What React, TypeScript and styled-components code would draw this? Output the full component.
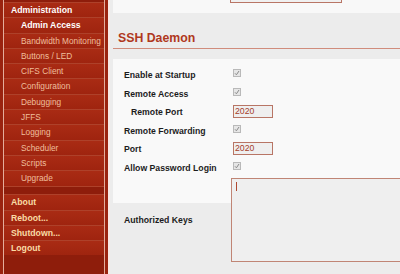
import { Fragment } from "react"
import styled, { createGlobalStyle } from "styled-components"

const Global = createGlobalStyle`
  html, body {
    margin: 0;
    padding: 0;
    background: #eeeeee;
  }
  * {
    box-sizing: border-box;
  }
`

const Page = styled.div`
  display: flex;
  width: 400px;
  height: 274px;
  overflow: hidden;
  font-family: "Liberation Sans", Arial, sans-serif;
`

const Sidebar = styled.nav`
  width: 108px;
  flex: none;
  display: flex;
  background: #9a230f;
  padding: 0 3px 0 3px;
`

const NavLayout = styled.div`
  flex: 1;
  display: flex;
  flex-direction: column;
  padding-top: 2px;
  border-left: 1px solid #e4ad9c;
  border-right: 1px solid #e4ad9c;
  background: #8e1d0b;
`

const NavItem = styled.div<{ $level: "head" | "current" | "sub" | "main" }>`
  height: 15.3px;
  line-height: 15px;
  border-top: 1px solid #ae412a;
  background: linear-gradient(#a92b14, #9f240f);
  white-space: nowrap;
  font-size: ${(p) => (p.$level === "sub" ? "8.3px" : "8.7px")};
  font-weight: ${(p) => (p.$level === "sub" ? "normal" : "bold")};
  padding-left: ${(p) =>
    p.$level === "head" || p.$level === "main" ? "7px" : "17px"};
  color: ${(p) =>
    p.$level === "sub"
      ? "#efbf9d"
      : p.$level === "main"
        ? "#f9dca6"
        : "#ffffff"};
`

const NavGap = styled.div`
  height: 8.7px;
  border-top: 1px solid #ae412a;
  background: #8e1d0b;
`

const Main = styled.main`
  flex: 1;
  display: flex;
  flex-direction: column;
  border-left: 2px solid #f7e9e5;
  background: #ececec;
  padding-left: 3px;
`

const TopPanel = styled.div`
  height: 13px;
  background: #f8f8f8;
`

const TopField = styled.div`
  margin-left: 117px;
  width: 112px;
  height: 3px;
  border: 1px solid #b87565;
  border-top: none;
  background: #f0f0f0;
`

const Heading = styled.h2`
  margin: 17.7px 0 10px;
  padding: 0 0 3px 5px;
  font-size: 12.3px;
  line-height: 14px;
  font-weight: bold;
  color: #b03820;
  border-bottom: 1px solid #d08c7c;
`

const Panel = styled.section`
  background: #f9f9f9;
  padding: 7.75px 0 7px 11px;
  display: grid;
  grid-template-columns: 108px 1fr;
  grid-auto-rows: 18.5px;
`

const Label = styled.label<{ $indent?: boolean }>`
  font-size: 8.7px;
  font-weight: bold;
  color: #1c1c1c;
  line-height: 18.5px;
  padding-left: ${(p) => (p.$indent ? "7px" : "0")};
  align-self: center;
  white-space: nowrap;
`

const Value = styled.div`
  display: flex;
  align-items: center;
  padding-bottom: 3px;
`

const Check = styled.span`
  display: flex;
  align-items: center;
  justify-content: center;
  width: 8px;
  height: 8px;
  margin-left: 1px;
  margin-bottom: 2px;
  border: 1px solid #b9b9b9;
  background: #e6e6e6;
`

const Field = styled.div`
  width: 40px;
  height: 13.5px;
  margin-left: 1px;
  margin-top: 1px;
  border: 1px solid #b87565;
  background: #efefef;
  color: #a5402a;
  font-size: 8.7px;
  line-height: 11.5px;
  padding-left: 1px;
`

const KeysRow = styled.div`
  grid-column: 1 / -1;
  display: grid;
  grid-template-columns: 108px 1fr;
  align-items: center;
  margin-top: 1px;
  height: 84px;
`

const KeysBox = styled.div`
  height: 84px;
  margin-left: -1px;
  margin-right: -20px;
  border: 1px solid #c08575;
  background: #efefef;
  padding: 3px 4px;
`

const Caret = styled.span`
  display: block;
  width: 1px;
  height: 9px;
  background: #b04830;
`

const Tick = () => (
  <svg width="6" height="6" viewBox="0 0 6 6">
    <path d="M1 3.3 L2.4 4.8 L5 1" fill="none" stroke="#8a8a8a" strokeWidth="1" />
  </svg>
)

const tools = [
  "Bandwidth Monitoring",
  "Buttons / LED",
  "CIFS Client",
  "Configuration",
  "Debugging",
  "JFFS",
  "Logging",
  "Scheduler",
  "Scripts",
  "Upgrade",
]

const actions = ["About", "Reboot...", "Shutdown...", "Logout"]

type Row =
  | { label: string; kind: "check"; indent?: boolean }
  | { label: string; kind: "field"; value: string; indent?: boolean }

const rows: Row[] = [
  { label: "Enable at Startup", kind: "check" },
  { label: "Remote Access", kind: "check" },
  { label: "Remote Port", kind: "field", value: "2020", indent: true },
  { label: "Remote Forwarding", kind: "check" },
  { label: "Port", kind: "field", value: "2020" },
  { label: "Allow Password Login", kind: "check" },
]

const App = () => (
  <Page>
    <Global />
    <Sidebar>
      <NavLayout>
        <NavItem $level="head">Administration</NavItem>
        <NavItem $level="current">Admin Access</NavItem>
        {tools.map((t) => (
          <NavItem key={t} $level="sub">
            {t}
          </NavItem>
        ))}
        <NavGap />
        {actions.map((a) => (
          <NavItem key={a} $level="main">
            {a}
          </NavItem>
        ))}
      </NavLayout>
    </Sidebar>
    <Main>
      <TopPanel>
        <TopField />
      </TopPanel>
      <Heading>SSH Daemon</Heading>
      <Panel>
        {rows.map((r) => (
          <Fragment key={r.label}>
            <Label $indent={r.indent}>{r.label}</Label>
            <Value>
              {r.kind === "check" ? (
                <Check>
                  <Tick />
                </Check>
              ) : (
                <Field>{r.value}</Field>
              )}
            </Value>
          </Fragment>
        ))}
        <KeysRow>
          <Label>Authorized Keys</Label>
          <KeysBox>
            <Caret />
          </KeysBox>
        </KeysRow>
      </Panel>
    </Main>
  </Page>
)

export default App
